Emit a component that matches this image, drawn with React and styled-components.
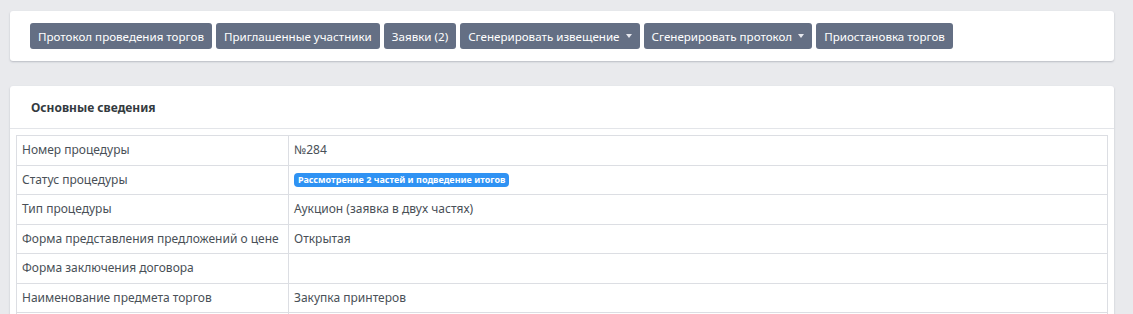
import React from "react";
import styled, { createGlobalStyle } from "styled-components";

const Global = createGlobalStyle`
  html, body { margin: 0; padding: 0; background: #e9eaed; }
  body { font-family: "Noto Sans", "Open Sans", sans-serif; color: #495057; }
`;

const Page = styled.div`
  padding: 11px 19px 0 10px;
  display: flex;
  flex-direction: column;
  gap: 25px;
`;

const Card = styled.div`
  background: #fff;
  border-radius: 3px;
  box-shadow: 0 1px 2px rgba(60, 70, 90, 0.28);
`;

const Toolbar = styled.div`
  display: flex;
  gap: 4px;
  padding: 12px 20px;
`;

const Button = styled.button`
  display: inline-flex;
  align-items: center;
  height: 26px;
  padding: 0 8px;
  border: none;
  border-radius: 3px;
  background: #646f84;
  color: #fff;
  font-family: "Noto Sans", "Open Sans", sans-serif;
  font-size: 11.6px;
  white-space: nowrap;
`;

const Caret = styled.span`
  display: inline-block;
  margin-left: 6px;
  width: 0;
  height: 0;
  border-left: 3px solid transparent;
  border-right: 3px solid transparent;
  border-top: 4px solid #e6e8ee;
`;

const CardHeader = styled.div`
  height: 42px;
  display: flex;
  align-items: center;
  padding: 0 21px;
  border-bottom: 1px solid #e3e5e9;
  font-size: 12px;
  font-weight: 700;
  color: #343a40;
`;

const CardBody = styled.div`
  padding: 6px 6px 0 6px;
`;

const Table = styled.table`
  width: 100%;
  border-collapse: collapse;
  table-layout: fixed;
  font-size: 12px;
  color: #495057;
`;

const Col = styled.col`
  width: ${(p) => p.$w || "auto"};
`;

const Cell = styled.td`
  border: 1px solid #dcdee3;
  padding: 5px 5px;
  line-height: 18.5px;
  white-space: nowrap;
  vertical-align: middle;
`;

const Badge = styled.span`
  display: inline-block;
  background: #2f92f3;
  color: #fff;
  font-size: 9px;
  font-weight: 700;
  line-height: 14px;
  padding: 0 4px;
  border-radius: 4px;
  vertical-align: middle;
`;

const buttons = [
  { t: "Протокол проведения торгов" },
  { t: "Приглашенные участники" },
  { t: "Заявки (2)" },
  { t: "Сгенерировать извещение", caret: true },
  { t: "Сгенерировать протокол", caret: true },
  { t: "Приостановка торгов" },
];

const rows = [
  ["Номер процедуры", "№284"],
  ["Статус процедуры", <Badge key="b">Рассмотрение 2 частей и подведение итогов</Badge>],
  ["Тип процедуры", "Аукцион (заявка в двух частях)"],
  ["Форма представления предложений о цене", "Открытая"],
  ["Форма заключения договора", ""],
  ["Наименование предмета торгов", "Закупка принтеров"],
  ["", ""],
];

export default function App() {
  return (
    <>
      <Global />
      <Page>
        <Card>
          <Toolbar>
            {buttons.map((b) => (
              <Button key={b.t}>
                {b.t}
                {b.caret && <Caret />}
              </Button>
            ))}
          </Toolbar>
        </Card>
        <Card>
          <CardHeader>Основные сведения</CardHeader>
          <CardBody>
            <Table>
              <colgroup>
                <Col $w="272px" />
                <Col />
              </colgroup>
              <tbody>
                {rows.map((r, i) => (
                  <tr key={i}>
                    <Cell>{r[0]}</Cell>
                    <Cell>{r[1]}</Cell>
                  </tr>
                ))}
              </tbody>
            </Table>
          </CardBody>
        </Card>
      </Page>
    </>
  );
}
